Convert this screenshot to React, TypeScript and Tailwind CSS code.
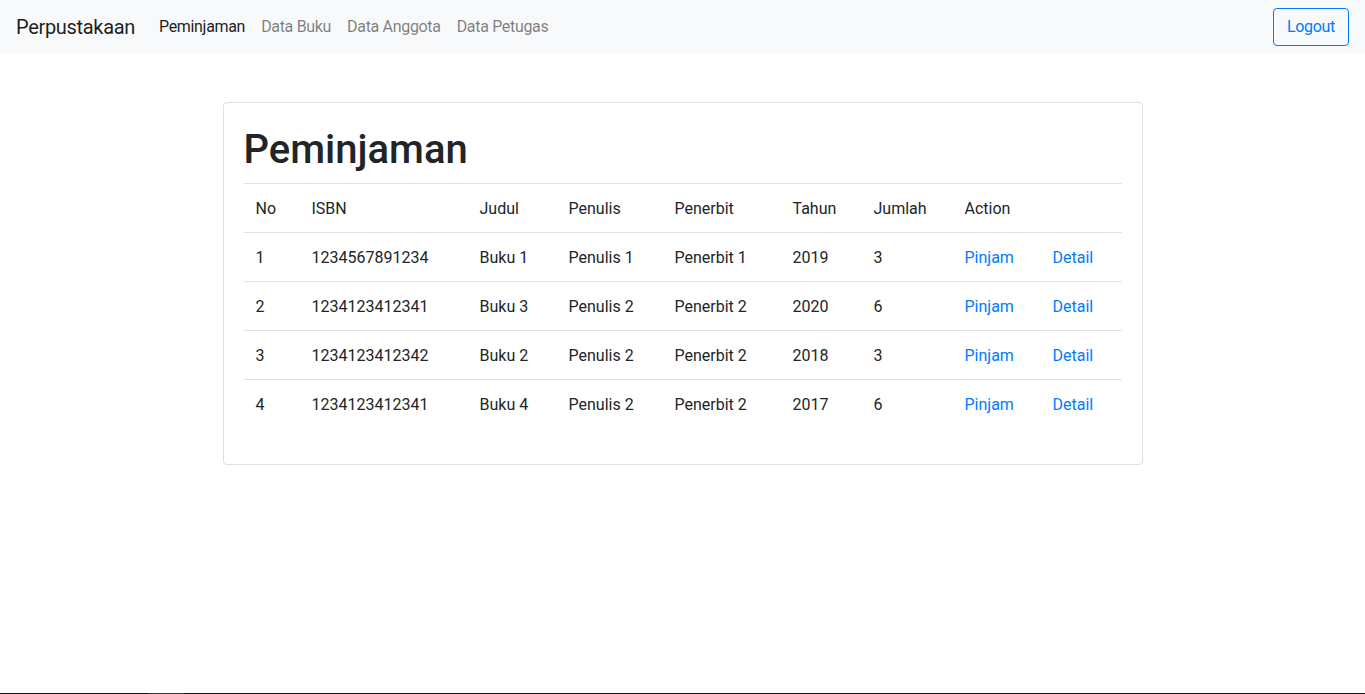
import React from "react";

const rows = [
  { no: 1, isbn: "1234567891234", judul: "Buku 1", penulis: "Penulis 1", penerbit: "Penerbit 1", tahun: 2019, jumlah: 3 },
  { no: 2, isbn: "1234123412341", judul: "Buku 3", penulis: "Penulis 2", penerbit: "Penerbit 2", tahun: 2020, jumlah: 6 },
  { no: 3, isbn: "1234123412342", judul: "Buku 2", penulis: "Penulis 2", penerbit: "Penerbit 2", tahun: 2018, jumlah: 3 },
  { no: 4, isbn: "1234123412341", judul: "Buku 4", penulis: "Penulis 2", penerbit: "Penerbit 2", tahun: 2017, jumlah: 6 },
];

const widths = [56, 168, 89, 106, 118, 81, 91, 88, 81];
const cell = "px-3 pt-[13px] pb-[11px]";

export default function App() {
  return (
    <div className="flex flex-col h-[694px] bg-white text-[#212529] font-['Roboto',sans-serif]">
      <nav className="flex items-center h-[53px] px-4 bg-[#f8f9fa] tracking-[-0.02em]">
        <a className="text-[20px] leading-[30px] text-black/90 mr-4">Perpustakaan</a>
        <ul className="flex text-[16px] leading-6">
          <li className="px-2 text-black/90">Peminjaman</li>
          <li className="px-2 text-black/50">Data Buku</li>
          <li className="px-2 text-black/50">Data Anggota</li>
          <li className="px-2 text-black/50">Data Petugas</li>
        </ul>
        <button className="ml-auto mt-[1px] w-[76px] h-[38px] border border-[#007bff] rounded text-[#007bff] text-[16px] leading-6">
          Logout
        </button>
      </nav>

      <div className="w-[920px] mx-auto mt-[49px] border border-black/[0.125] rounded p-5 pb-5">
        <h1 className="text-[40px] leading-[48px] font-medium pt-[3px] mb-[9px]">Peminjaman</h1>
        <table className="w-full table-fixed border-collapse text-[16px] leading-6 mb-4">
          <colgroup>
            {widths.map((w, i) => (
              <col key={i} style={{ width: w }} />
            ))}
          </colgroup>
          <thead>
            <tr className="border-t border-[#dee2e6]">
              <td className={cell}>No</td>
              <td className={cell}>ISBN</td>
              <td className={cell}>Judul</td>
              <td className={cell}>Penulis</td>
              <td className={cell}>Penerbit</td>
              <td className={cell}>Tahun</td>
              <td className={cell}>Jumlah</td>
              <td className={cell}>Action</td>
              <td className={cell}></td>
            </tr>
          </thead>
          <tbody>
            {rows.map((r) => (
              <tr key={r.no} className="border-t border-[#dee2e6]">
                <td className={cell}>{r.no}</td>
                <td className={cell}>{r.isbn}</td>
                <td className={cell}>{r.judul}</td>
                <td className={cell}>{r.penulis}</td>
                <td className={cell}>{r.penerbit}</td>
                <td className={cell}>{r.tahun}</td>
                <td className={cell}>{r.jumlah}</td>
                <td className={`${cell} text-[#007bff]`}>Pinjam</td>
                <td className={`${cell} text-[#007bff]`}>Detail</td>
              </tr>
            ))}
          </tbody>
        </table>
      </div>

      <div className="flex-1" />
      <div className="flex h-px">
        <div className="w-[148px] bg-[#111]" />
        <div className="w-[36px] bg-[#333]" />
        <div className="flex-1 bg-[#111]" />
      </div>
    </div>
  );
}
